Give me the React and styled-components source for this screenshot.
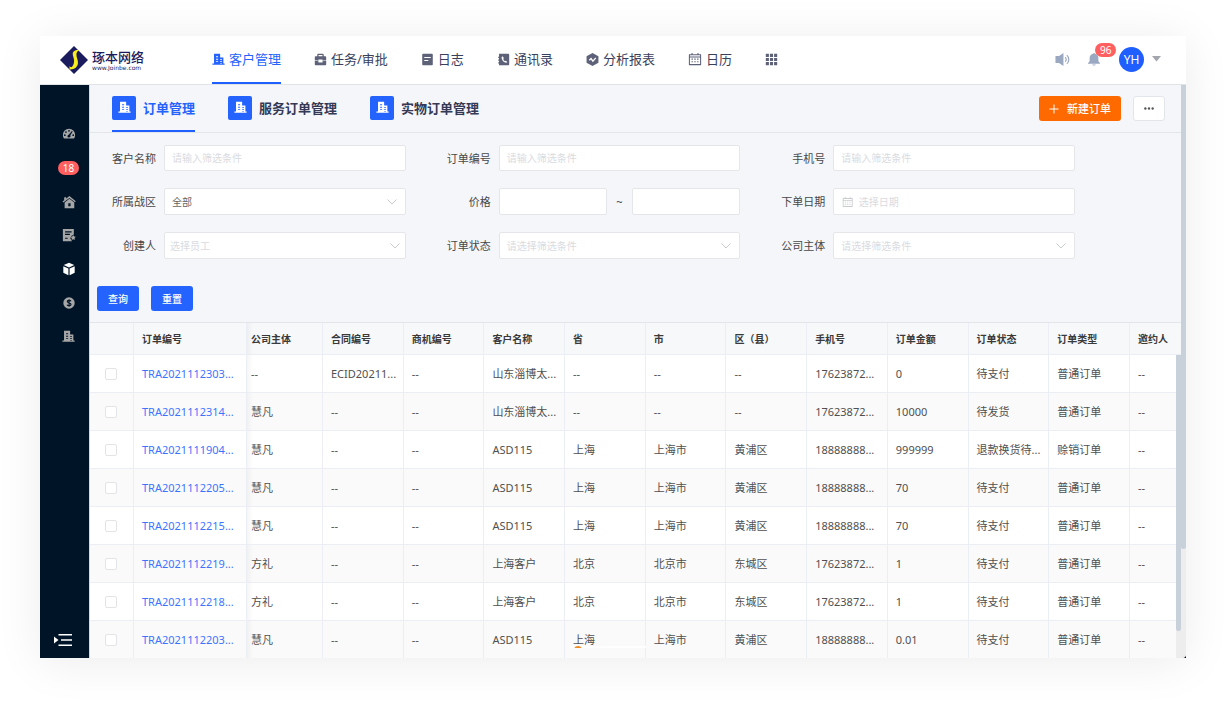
import React, { useState } from 'react';
import styled, { createGlobalStyle, css } from 'styled-components';

const GlobalStyle = createGlobalStyle`
*, *::before, *::after {
box-sizing: border-box;
}
body {
margin: 0;
background: #fff;
}
body, button, input, select {
font-family: "Noto Sans", "Noto Sans CJK SC", sans-serif;
}
`;

const Page = styled.div`
display: flex;
height: 100vh;
padding: 36px 40px 44px;
overflow: hidden;
`;

const Window = styled.div`
flex: 1;
min-width: 0;
display: flex;
flex-direction: column;
background: #fff;
box-shadow: 0 4px 44px rgba(0, 0, 0, 0.08);
`;

/* top bar */

const Header = styled.header`
display: flex;
height: 49px;
padding: 0 25px 0 20px;
border-bottom: 1px solid #e1e4e6;
background: #fff;
`;

const Brand = styled.a`
display: flex;
align-items: center;
gap: 4px;
width: 152px;
color: #1b1c5e;
text-decoration: none;
`;

const BrandName = styled.strong`
display: block;
font-size: 13px;
font-weight: 500;
line-height: 15px;
`;

const BrandUrl = styled.span`
display: block;
font-family: "DejaVu Sans", sans-serif;
font-size: 6px;
line-height: 6px;
`;

const Nav = styled.nav`
display: flex;
gap: 33px;
flex: 1;
`;

const NavLink = styled.a`
display: flex;
align-items: center;
gap: 4px;
border-bottom: 2px solid ${props => props.$active ? '#1f5eff' : 'transparent'};
color: ${props => props.$active ? '#2563ff' : '#3a3f5c'};
font-size: 13px;
line-height: 18px;
text-decoration: none;
white-space: nowrap;

svg {
color: ${props => props.$active ? '#2563ff' : '#5d6279'};
}
`;

const Tools = styled.div`
display: flex;
align-items: center;
padding-bottom: 2px;
color: #9ba8c2;
`;

const IconButton = styled.button`
display: flex;
padding: 0;
border: 0;
background: none;
color: inherit;
cursor: pointer;
`;

const BellButton = styled(IconButton)`
position: relative;
margin: 0 18px 0 17px;
`;

const Badge = styled.span`
padding: 0 5px;
border-radius: 8px;
background: #ff5f5f;
color: #fff;
font-size: 10px;
line-height: 14px;
`;

const BellBadge = styled(Badge)`
position: absolute;
left: 8px;
top: -9px;
`;

const Avatar = styled.span`
width: 25px;
height: 25px;
margin-right: 8px;
border-radius: 50%;
background: #1f5eff;
color: #fff;
font-size: 12px;
line-height: 25px;
text-align: center;
`;

/* side bar */

const Body = styled.div`
flex: 1;
min-height: 0;
display: flex;
background: #000c1a;
`;

const Sidebar = styled.aside`
display: flex;
flex-direction: column;
justify-content: space-between;
width: 50px;
padding: 42px 0 12px 8px;
border-right: 1px solid #d6dade;
background: #001428;
color: #a6a6a6;
`;

const SideList = styled.div`
display: flex;
flex-direction: column;
justify-content: space-between;
align-items: center;
height: 216px;
`;

const SideLink = styled.a`
display: flex;
color: ${props => props.$active ? '#fff' : 'inherit'};
text-decoration: none;
`;

const CollapseButton = styled(IconButton)`
padding-left: 6px;
color: #fff;
`;

/* content */

const Main = styled.main`
flex: 1;
min-width: 0;
display: flex;
background: #eee;
border-bottom-right-radius: 4px;
overflow: hidden;
`;

const Content = styled.div`
flex: 1;
min-width: 0;
display: flex;
flex-direction: column;
background: #f4f6fa;
`;

const TabBar = styled.div`
display: flex;
flex: none;
height: 48px;
padding: 0 16px 0 22px;
border-bottom: 1px solid #e3e6e9;
`;

const Tabs = styled.nav`
display: flex;
flex: 1;
gap: 33px;
`;

const TabLink = styled.a`
display: flex;
align-items: center;
gap: 7px;
border-bottom: 2px solid ${props => props.$active ? '#1f5eff' : 'transparent'};
color: ${props => props.$active ? '#2563ff' : '#343955'};
font-size: 13px;
font-weight: 700;
line-height: 18px;
text-decoration: none;
white-space: nowrap;
`;

const TabIcon = styled.span`
display: flex;
align-items: center;
justify-content: center;
width: 24px;
height: 24px;
border-radius: 2px;
background: #2563ff;
color: #fff;
`;

const Actions = styled.div`
display: flex;
align-items: center;
gap: 12px;
`;

const Button = styled.button`
height: 25px;
padding: 0 11px;
border: 0;
border-radius: 3px;
background: #2563ff;
color: #fff;
font-size: 10px;
font-weight: 500;
line-height: 16px;
cursor: pointer;
`;

const CreateButton = styled(Button)`
display: flex;
align-items: center;
gap: 8px;
padding: 0 10px;
background: #ff6a00;
font-size: 11px;
`;

const MoreButton = styled(Button)`
display: flex;
align-items: center;
padding: 0 10px;
border: 1px solid #e2e5e9;
background: #fff;
color: #555;
`;

const FilterForm = styled.form`
flex: none;
padding: 12px 0 11px;
`;

const Fields = styled.div`
display: grid;
grid-template-columns: 74px 1fr 93px 1fr 93px 1fr;
grid-template-rows: 26px 27px 27px;
row-gap: 17px;
padding-right: 106px;
`;

const Label = styled.label`
padding-right: 8px;
color: #484848;
font-size: 11px;
line-height: 27px;
text-align: right;
`;

const control = css`
min-width: 0;
border: 1px solid #e4e6ea;
border-radius: 2px;
background: #fff;
`;

const Input = styled.input`
${control}
width: 100%;
height: 100%;
padding: 0 7px;
color: #555;
font-size: 10px;
outline: 0;

&::placeholder {
color: #d9dbdf;
}
`;

const Box = styled.div`
${control}
display: flex;
align-items: center;
padding: 0 ${props => props.$tight ? '4px' : '7px'} 0 0;
color: #c8cbd0;
`;

const Select = styled.select`
flex: 1;
min-width: 0;
height: 100%;
padding: 0 ${props => props.$tight ? '5px' : '7px'};
border: 0;
appearance: none;
background: transparent;
color: ${props => props.$filled ? '#666' : '#d9dbdf'};
font-size: 10px;
outline: 0;
`;

const DateBox = styled(Box)`
padding: 0 8px;
`;

const DateInput = styled(Input)`
border: 0;
padding: 0 5px;
`;

const Range = styled.div`
display: grid;
grid-template-columns: 1fr 25px 1fr;
align-items: center;
color: #444;
font-size: 11px;
text-align: center;
`;

const FormButtons = styled.div`
display: flex;
gap: 12px;
margin-top: 27px;
padding-left: 7px;
`;

/* orders table */

const TableWrap = styled.div`
position: relative;
flex: 1;
min-height: 0;
overflow: hidden;
border-top: 1px solid #e3e6e9;
`;

const Table = styled.table`
width: 100%;
table-layout: fixed;
border-collapse: separate;
border-spacing: 0;
color: #505050;
font-size: 11px;
`;

const Row = styled.tr`
background: ${props => props.$odd ? '#fafafa' : '#fff'};
`;

const cell = css`
padding: 0 0 0 8px;
border-right: 1px solid #ebeef5;
border-bottom: 1px solid #ebeef5;
text-align: left;
white-space: nowrap;
overflow: hidden;

&:nth-child(3) {
padding-left: 4px;
background-image: linear-gradient(to right, rgba(0, 0, 0, 0.04), transparent 6px);
}
&:last-child {
border-right: 0;
}
`;

const Th = styled.th`
${cell}
height: 32px;
background-color: #f6f8fa;
color: #3a3a3a;
font-size: 10px;
font-weight: 700;
`;

const Td = styled.td`
${cell}
height: 38px;
line-height: 18px;
`;

const CheckCell = styled(Td)`
padding: 0;
`;

const CheckBox = styled.input`
display: block;
width: 12px;
height: 12px;
margin: 0 0 0 15px;
appearance: none;
border: 1px solid #e2e4e8;
border-radius: 2px;
background: #fff;

&:checked {
background: #2563ff;
}
`;

const OrderLink = styled.a`
color: #3d74ff;
text-decoration: none;
`;

const Track = styled.div`
flex: none;
width: 5px;
background: #ededed;
`;

const TableTrack = styled(Track)`
position: absolute;
top: 32px;
right: 0;
bottom: 0;
`;

const Thumb = styled.div`
height: ${props => props.$size};
border-radius: 0 0 3px 3px;
background: #c8d0da;
`;

/* top edge of the notice that slides in over the last row */
const Peek = styled.div`
position: absolute;
left: 44%;
bottom: 10px;
width: 76px;
height: 2px;
padding-left: 4px;
background: #fff;
overflow: hidden;
`;

const PeekDot = styled.div`
width: 8px;
height: 8px;
border-radius: 50%;
background: #f08a24;
`;

const Icon = ({ size = 13, box = 16, children }) => (
    <svg width={size} height={size} viewBox={`0 0 ${box} ${box}`} fill="currentColor" aria-hidden="true">
        {children}
    </svg>
);

const Building = ({ size }) => (
    <Icon size={size}>
        <path fillRule="evenodd" d="M2.500 1h7.500v4.500h4V13h1.500v1.500H.5V13h2zM5 4v1.200h2.500V4zm0 3v1.200h2.500V7zm0 3v1.200h2.500V10zM10 7.300v1h2.300v-1zm0 2.700v1h2.300v-1zM10 12.500v.8h2.300v-.8z" />
    </Icon>
);

const Briefcase = () => (
    <Icon>
        <path fillRule="evenodd" d="M4 4V2.600C4 1.700 4.700 1 5.600 1h4.800c.9 0 1.600.7 1.600 1.600V4h2c.6 0 1 .4 1 1v3.500l-4.500 1V8h-5v1.500L1 8.500V5c0-.6.4-1 1-1zm1.600 0h4.800V2.600H5.600z" />
        <path d="M1 9.300l4.500 1v1.500h5v-1.500l4.500-1V14c0 .6-.4 1-1 1H2c-.6 0-1-.4-1-1z" />
    </Icon>
);

const Note = () => (
    <Icon>
        <path fillRule="evenodd" d="M2.500 1h11c.6 0 1 .4 1 1v12c0 .6-.4 1-1 1h-11c-.6 0-1-.4-1-1V2c0-.6.4-1 1-1zM4 4.800v1.400h8V4.800zm0 3.700v1.400h5V8.500z" />
    </Icon>
);

const PhoneBook = () => (
    <Icon>
        <path fillRule="evenodd" d="M2.500 1H14c.6 0 1 .4 1 1v12c0 .6-.4 1-1 1H2.500v-2H1.500v-1.500h1v-2h-1V8h1V6h-1V4.500h1zM6.500 4c-.8.6-1 1.500-.7 2.700.6 2.300 2.200 4.200 4.300 5 1.100.4 2 .2 2.600-.6l-1.900-1.700-1.100.7C8.600 9.300 7.900 8.200 7.600 7l1-.8z" />
    </Icon>
);

const Report = () => (
    <Icon>
        <path d="M8 0l7.300 4v8L8 16 .7 12V4z" />
        <path d="M4 8.800l2.200-2 2.300 3.200L12 6" fill="none" stroke="#fff" strokeWidth="1.600" />
    </Icon>
);

const Calendar = ({ size }) => (
    <Icon size={size}>
        <path fillRule="evenodd" d="M4 1h1.200v1.500h5.600V1H12v1.500h2.500c.3 0 .5.2.5.500v11.500c0 .3-.2.5-.5.500h-13c-.3 0-.5-.2-.5-.500V3c0-.3.200-.5.500-.500H4zM2.200 3.700v1.500h11.600V3.700zm0 2.500v7.600h11.600V6.200z" />
        <path d="M4 7.500h1.600v1.300H4zm3.200 0h1.600v1.300H7.200zm3.200 0H12v1.300h-1.600zM4 10.500h1.600v1.300H4zm3.200 0h1.600v1.300H7.200zm3.200 0H12v1.300h-1.600z" />
    </Icon>
);

const Apps = () => (
    <Icon>
        <path d="M1 1h3.800v3.800H1zm5.100 0h3.800v3.800H6.100zm5.100 0H15v3.800h-3.800zM1 6.100h3.800v3.800H1zm5.100 0h3.800v3.800H6.100zm5.100 0H15v3.800h-3.800zM1 11.200h3.800V15H1zm5.100 0h3.800V15H6.100zm5.100 0H15V15h-3.800z" />
    </Icon>
);

const Speaker = () => (
    <Icon size={15}>
        <path d="M.5 4.200h3.800L9 1v14l-4.700-3.200H.5z" />
        <path d="M10.800 5.500c1.500 1.200 1.500 3.800 0 5M12.600 3.300c2.800 2.400 2.800 7 0 9.400" fill="none" stroke="currentColor" strokeWidth="1.300" />
    </Icon>
);

const Bell = () => (
    <Icon size={14}>
        <path d="M7 2c0-1.300 2-1.300 2 0 2.500.5 4 2.400 4 5v3.500l1.800 2v.8H1.200v-.8l1.800-2V7c0-2.600 1.500-4.500 4-5zM6 14.200h4c-.3 1.700-3.700 1.700-4 0z" />
    </Icon>
);

const Gauge = () => (
    <Icon size={14}>
        <path d="M8 2a7 7 0 0 1 7 7c0 1.600-.5 3-1.300 4.200H2.300A7.400 7.400 0 0 1 1 9a7 7 0 0 1 7-7z" />
        <g fill="#001428">
            <circle cx="8" cy="4.300" r="1" />
            <circle cx="4.500" cy="5.800" r="1" />
            <circle cx="3.200" cy="9.300" r="1" />
            <circle cx="12.800" cy="9.300" r="1" />
            <path d="M11.300 4.600l.9.600-2.700 4.300c.8 1.300 0 2.600-1.500 2.600-2 0-2.400-2.600-.3-3.300z" />
        </g>
    </Icon>
);

const House = () => (
    <Icon size={14}>
        <path d="M8.500 1.200L15.700 7l-.9 1.200L8.500 3.300 1.500 8.700l-.9-1.200z" />
        <path fillRule="evenodd" d="M8.500 4.300L14 8.700V15H3V8.700zM7.200 9.500v3.300h2.600V9.500z" />
        <path d="M2.500 2.500h2.300v2l-2.300 1.800z" />
    </Icon>
);

const Form = () => (
    <Icon size={14}>
        <path fillRule="evenodd" d="M1 1h12.500v6.500L10.500 9l-1 3 2 3H1zm2.500 2.700V5H11V3.700zm0 3V8H9V6.700zm0 4.300v1.300h3V11z" />
        <path d="M12.800 8l1 1.700 2 .4-1.400 1.500.2 2-1.800-.8-1.800.8.2-2L9.800 10.100l2-.4z" />
    </Icon>
);

const Cube = () => (
    <Icon size={14}>
        <path d="M8 .8l6 2.700-6 2.800-6-2.800zM1.500 4.800l5.800 2.700v7.700l-5.800-3zM14.500 4.800L8.700 7.500v7.700l5.800-3z" />
    </Icon>
);

const Coin = () => (
    <Icon size={14}>
        <circle cx="8" cy="8" r="6.500" />
        <path d="M10.300 6C9.600 4.700 6 4.600 6 6.400c0 1.700 4.300 1.300 4.300 3.300 0 1.800-3.800 1.800-4.600.2M8.100 3.600v8.800" fill="none" stroke="#001428" strokeWidth="1.300" />
    </Icon>
);

const Chevron = () => (
    <svg width="12" height="8" viewBox="0 0 12 8" fill="none" stroke="currentColor" aria-hidden="true">
        <path d="M1.500 1.500L6 6l4.500-4.500" />
    </svg>
);

const Logo = () => (
    <svg width="28" height="28" viewBox="0 0 28 28" aria-hidden="true">
        <path d="M14 0l14 14-14 14L0 14z" fill="#1b1c5e" />
        <path d="M19.500 4c-4.500-.5-7.200 1.500-6.700 4.800.5 3 1.900 5 1.100 8.200-.7 3-2.300 4.800-5.400 6.300 5 .8 8.700-1.500 9.400-5.500.6-3.500-1.700-6-1.500-9.500.1-2 1.100-3.300 3.100-4.300z" fill="#f7ee1e" />
        <path d="M9 19.500c.5 1.500 2 2 3.500 1.200L10 23.200z" fill="#f7ee1e" />
    </svg>
);

const navItems = [
    { text: '客户管理', icon: <Building />, active: true },
    { text: '任务/审批', icon: <Briefcase /> },
    { text: '日志', icon: <Note /> },
    { text: '通讯录', icon: <PhoneBook /> },
    { text: '分析报表', icon: <Report /> },
    { text: '日历', icon: <Calendar size={14} /> },
];

const tabs = ['订单管理', '服务订单管理', '实物订单管理'];

const columns = ['订单编号', '公司主体', '合同编号', '商机编号', '客户名称', '省', '市', '区（县）', '手机号', '订单金额', '订单状态', '订单类型', '邀约人'];

const orders = [
    ['TRA2021112303...', '--', 'ECID20211...', '--', '山东淄博太...', '--', '--', '--', '17623872...', '0', '待支付', '普通订单', '--'],
    ['TRA2021112314...', '慧凡', '--', '--', '山东淄博太...', '--', '--', '--', '17623872...', '10000', '待发货', '普通订单', '--'],
    ['TRA2021111904...', '慧凡', '--', '--', 'ASD115', '上海', '上海市', '黄浦区', '18888888...', '999999', '退款换货待...', '赊销订单', '--'],
    ['TRA2021112205...', '慧凡', '--', '--', 'ASD115', '上海', '上海市', '黄浦区', '18888888...', '70', '待支付', '普通订单', '--'],
    ['TRA2021112215...', '慧凡', '--', '--', 'ASD115', '上海', '上海市', '黄浦区', '18888888...', '70', '待支付', '普通订单', '--'],
    ['TRA2021112219...', '方礼', '--', '--', '上海客户', '北京', '北京市', '东城区', '17623872...', '1', '待支付', '普通订单', '--'],
    ['TRA2021112218...', '方礼', '--', '--', '上海客户', '北京', '北京市', '东城区', '17623872...', '1', '待支付', '普通订单', '--'],
    ['TRA2021112203...', '慧凡', '--', '--', 'ASD115', '上海', '上海市', '黄浦区', '18888888...', '0.01', '待支付', '普通订单', '--'],
];

const SelectField = ({ id, text, filled, tight }) => (
    <Box $tight={tight}>
        <Select id={id} $filled={filled} $tight={tight}>
            <option>{text}</option>
        </Select>
        <Chevron />
    </Box>
);

const TopBar = () => (
    <Header>
        <Brand href="#">
            <Logo />
            <span>
                <BrandName>琢本网络</BrandName>
                <BrandUrl>www.Joinbe.com</BrandUrl>
            </span>
        </Brand>
        <Nav>
            {navItems.map(item => (
                <NavLink href="#" key={item.text} $active={item.active}>
                    {item.icon}
                    {item.text}
                </NavLink>
            ))}
            <NavLink href="#" aria-label="更多应用"><Apps /></NavLink>
        </Nav>
        <Tools>
            <IconButton aria-label="声音"><Speaker /></IconButton>
            <BellButton aria-label="通知">
                <Bell />
                <BellBadge>96</BellBadge>
            </BellButton>
            <Avatar>YH</Avatar>
            <IconButton aria-label="账号菜单">
                <svg width="9" height="6" viewBox="0 0 9 6" fill="#a3a6ad"><path d="M0 0h9L4.500 5.500z" /></svg>
            </IconButton>
        </Tools>
    </Header>
);

const SideBar = () => (
    <Sidebar>
        <SideList>
            <SideLink href="#" aria-label="仪表盘"><Gauge /></SideLink>
            <SideLink href="#"><Badge>18</Badge></SideLink>
            <SideLink href="#" aria-label="首页"><House /></SideLink>
            <SideLink href="#" aria-label="表单"><Form /></SideLink>
            <SideLink href="#" aria-label="订单" $active><Cube /></SideLink>
            <SideLink href="#" aria-label="财务"><Coin /></SideLink>
            <SideLink href="#" aria-label="公司"><Building size={13} /></SideLink>
        </SideList>
        <CollapseButton aria-label="展开菜单">
            <svg width="18" height="12" viewBox="0 0 18 12" fill="currentColor">
                <path d="M0 2.500L4.500 6 0 9.500zM4.500 0H18v1.600H4.500zM7 5.200h11v1.600H7zM4.500 10.400H18V12H4.500z" />
            </svg>
        </CollapseButton>
    </Sidebar>
);

const Filters = () => (
    <FilterForm onSubmit={e => e.preventDefault()}>
        <Fields>
            <Label htmlFor="customer">客户名称</Label>
            <Input id="customer" placeholder="请输入筛选条件" />
            <Label htmlFor="orderNo">订单编号</Label>
            <Input id="orderNo" placeholder="请输入筛选条件" />
            <Label htmlFor="phone">手机号</Label>
            <Input id="phone" placeholder="请输入筛选条件" />

            <Label htmlFor="area">所属战区</Label>
            <SelectField id="area" text="全部" filled />
            <Label htmlFor="priceFrom">价格</Label>
            <Range>
                <Input id="priceFrom" />
                ~
                <Input aria-label="最高价格" />
            </Range>
            <Label htmlFor="orderDate">下单日期</Label>
            <DateBox>
                <Calendar size={12} />
                <DateInput id="orderDate" placeholder="选择日期" />
            </DateBox>

            <Label htmlFor="creator">创建人</Label>
            <SelectField id="creator" text="选择员工" tight />
            <Label htmlFor="status">订单状态</Label>
            <SelectField id="status" text="请选择筛选条件" />
            <Label htmlFor="company">公司主体</Label>
            <SelectField id="company" text="请选择筛选条件" />
        </Fields>
        <FormButtons>
            <Button type="submit">查询</Button>
            <Button type="reset">重置</Button>
        </FormButtons>
    </FilterForm>
);

const OrderTable = () => {
    const [checked, setChecked] = useState([]);

    const toggle = id => {
        setChecked(checked.includes(id) ? checked.filter(c => c !== id) : [...checked, id]);
    };

    return (
        <TableWrap>
            <Table>
                <colgroup>
                    <col width="44" />
                    <col width="113" />
                    <col width="76" />
                    <col span="10" />
                    <col width="51" />
                </colgroup>
                <thead>
                    <tr>
                        <Th />
                        {columns.map(name => <Th key={name}>{name}</Th>)}
                    </tr>
                </thead>
                <tbody>
                    {orders.map(([id, ...cells], i) => (
                        <Row key={id} $odd={i % 2 === 1}>
                            <CheckCell>
                                <CheckBox type="checkbox" aria-label={id} checked={checked.includes(id)} onChange={() => toggle(id)} />
                            </CheckCell>
                            <Td><OrderLink href="#">{id}</OrderLink></Td>
                            {cells.map((text, n) => <Td key={n}>{text}</Td>)}
                        </Row>
                    ))}
                </tbody>
            </Table>
            <TableTrack><Thumb $size="91%" /></TableTrack>
            <Peek><PeekDot /></Peek>
        </TableWrap>
    );
};

const App = () => (
    <Page>
        <GlobalStyle />
        <Window>
            <TopBar />
            <Body>
                <SideBar />
                <Main>
                    <Content>
                        <TabBar>
                            <Tabs>
                                {tabs.map((name, i) => (
                                    <TabLink href="#" key={name} $active={i === 0}>
                                        <TabIcon><Building size={13} /></TabIcon>
                                        {name}
                                    </TabLink>
                                ))}
                            </Tabs>
                            <Actions>
                                <CreateButton>
                                    <svg width="10" height="10" viewBox="0 0 10 10" stroke="currentColor" aria-hidden="true"><path d="M5 .500v9M.500 5h9" /></svg>
                                    新建订单
                                </CreateButton>
                                <MoreButton aria-label="更多">
                                    <svg width="10" height="3" viewBox="0 0 11 3" fill="currentColor"><circle cx="1.500" cy="1.500" r="1.300" /><circle cx="5.500" cy="1.500" r="1.300" /><circle cx="9.500" cy="1.500" r="1.300" /></svg>
                                </MoreButton>
                            </Actions>
                        </TabBar>
                        <Filters />
                        <OrderTable />
                    </Content>
                    <Track><Thumb $size="81%" /></Track>
                </Main>
            </Body>
        </Window>
    </Page>
);

export default App;
